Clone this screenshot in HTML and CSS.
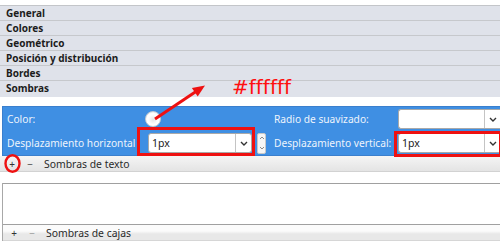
FILE: index.html
```html
<!DOCTYPE html>
<html lang="es">
<head>
<meta charset="utf-8">
<link rel="stylesheet" href="styles.css">
</head>
<body>
<div class="page">
  <div class="top-gap"></div>
  <ul class="sections">
    <li class="sec">General</li>
    <li class="sec">Colores</li>
    <li class="sec">Geométrico</li>
    <li class="sec">Posición y distribución</li>
    <li class="sec">Bordes</li>
    <li class="sec sec-last">Sombras</li>
  </ul>
  <div class="mid-gap"></div>
  <div class="props">
    <div class="lbl">Color:</div>
    <div class="val"><span class="swatch"></span></div>
    <div class="lbl lbl2">Radio de suavizado:</div>
    <div class="val2">
      <div class="combo combo-r"><span class="combo-text"></span><span class="combo-btn"><svg width="8" height="5" viewBox="0 0 8 5"><path d="M1 1 L4 4 L7 1" fill="none" stroke="#333" stroke-width="1.4"/></svg></span></div>
    </div>
    <div class="lbl">Desplazamiento horizontal</div>
    <div class="val">
      <div class="combo combo-h"><span class="combo-text">1px</span><span class="combo-btn"><svg width="8" height="5" viewBox="0 0 8 5"><path d="M1 1 L4 4 L7 1" fill="none" stroke="#333" stroke-width="1.4"/></svg></span></div>
      <div class="spin">
        <svg width="6" height="4" viewBox="0 0 6 4"><path d="M1 3 L3 1 L5 3" fill="none" stroke="#8a8a8a" stroke-width="1"/></svg>
        <svg width="6" height="4" viewBox="0 0 6 4"><path d="M1 1 L3 3 L5 1" fill="none" stroke="#8a8a8a" stroke-width="1"/></svg>
      </div>
    </div>
    <div class="lbl lbl2">Desplazamiento vertical:</div>
    <div class="val2">
      <div class="combo combo-r"><span class="combo-text">1px</span><span class="combo-btn"><svg width="8" height="5" viewBox="0 0 8 5"><path d="M1 1 L4 4 L7 1" fill="none" stroke="#333" stroke-width="1.4"/></svg></span></div>
    </div>
  </div>
  <div class="toolbar tb-text">
    <span class="tb-btn">+</span><span class="tb-btn tb-minus">−</span><span class="tb-label">Sombras de texto</span>
  </div>
  <div class="box-gap"></div>
  <div class="listbox">
    <div class="list-area"></div>
    <div class="toolbar tb-box">
      <span class="tb-btn">+</span><span class="tb-btn tb-minus faded">−</span><span class="tb-label">Sombras de cajas</span>
    </div>
  </div>

  <div class="note-text">#ffffff</div>
  <div class="mark mark-h"></div>
  <div class="mark mark-v"></div>
  <svg class="overlay" width="500" height="246" viewBox="0 0 500 246">
    <line x1="155" y1="119" x2="196" y2="91.5" stroke="#ee1111" stroke-width="3"/>
    <polygon points="205,85.5 197.7,96.6 191.9,88" fill="#ee1111"/>
    <ellipse cx="12.5" cy="163.5" rx="7" ry="8.3" fill="none" stroke="#ee1111" stroke-width="2.4"/>
  </svg>
</div>
</body>
</html>
```

FILE: styles.css
```css
* { box-sizing: border-box; }
html, body { margin: 0; padding: 0; background: #ffffff; }
body { width: 500px; height: 246px; overflow: hidden; font-family: "Noto Sans", "DejaVu Sans", sans-serif; }
.page { position: relative; width: 500px; height: 246px; }

.top-gap { height: 5px; }
.sections { list-style: none; margin: 0; padding: 0; border-top: 1px solid #c3c5c9; }
.sec {
  height: 15px;
  background: #dfe2ea;
  border-bottom: 1px solid #c6c8cc;
  font-weight: bold;
  font-size: 10px;
  line-height: 14px;
  color: #1c1c1c;
  padding-left: 6px;
}
.sec-last { border-bottom: none; height: 16px; line-height: 15px; }
.mid-gap { height: 9px; }

.props {
  margin-left: 2px;
  height: 50px;
  background: #3f8fe3;
  border: 1px solid #3a7fcd;
  border-right: none;
  display: grid;
  grid-template-columns: 144px 124px 127px 1fr;
  grid-template-rows: 20px 20px;
  row-gap: 4px;
  padding-top: 2px;
  align-items: center;
}
.lbl {
  color: #eef4fc;
  font-size: 10.2px;
  padding-left: 4px;
  white-space: nowrap;
}
.lbl2 { padding-left: 3px; }
.val { display: flex; align-items: center; height: 20px; }
.val2 { display: flex; align-items: center; height: 20px; }
.swatch {
  width: 16px; height: 16px;
  margin-left: -2px;
  border-radius: 50%;
  background: radial-gradient(circle at 50% 55%, #e6e6e6 0, #ffffff 45%, #ffffff 60%, #d8d8d8 100%);
  border: 1px solid #c8ccd2;
}
.combo {
  height: 20px;
  background: #ffffff;
  border: 1px solid #a9a9a9;
  border-radius: 3px;
  display: flex;
  align-items: stretch;
}
.combo-h { width: 104px; margin-left: 1px; }
.combo-r { width: 102px; border-right: none; border-radius: 3px 0 0 3px; }
.combo-text { flex: 1; font-size: 10.5px; line-height: 18px; padding-left: 3px; color: #1a1a1a; }
.combo-btn {
  width: 16px;
  border-left: 1px solid #c4c4c4;
  display: flex; align-items: center; justify-content: center;
}
.spin {
  margin-left: 5px;
  width: 9px; height: 21px;
  background: #f6f6f6;
  border: 1px solid #c8c8c8;
  border-radius: 2px;
  display: flex; flex-direction: column; align-items: center; justify-content: space-around;
}

.toolbar {
  height: 16px;
  display: flex;
  align-items: center;
  font-size: 10.4px;
  color: #2a2a2a;
}
.tb-text {
  background: linear-gradient(#f5f5f5, #e4e4e4);
  border-bottom: 1px solid #d2d2d2;
}
.tb-btn { width: 18px; text-align: center; font-size: 10px; color: #333; }
.tb-btn:first-child { margin-left: 3px; }
.tb-minus { color: #444; }
.faded { color: #9a9a9a; }
.tb-label { margin-left: 5px; }
.box-gap { height: 11px; }
.listbox { margin-left: 2px; border-left: 1px solid #a8a8a8; }
.list-area { height: 42px; border-top: 1px solid #a0a0a0; border-bottom: 1px solid #a0a0a0; background: #ffffff; }
.tb-box {
  background: linear-gradient(#fbfbfb 0, #fbfbfb 40%, #e8e8e8 60%, #e8e8e8 100%);
  border-bottom: 1px solid #d6d6d6;
}
.tb-box .tb-btn:first-child { margin-left: 2px; }

.note-text {
  position: absolute;
  left: 232px; top: 75px;
  color: #ff1010;
  font-family: "DejaVu Sans", sans-serif;
  font-size: 20px;
  line-height: 24px;
}
.mark { position: absolute; border: 3px solid #ee1111; }
.mark-h { left: 137px; top: 127px; width: 118px; height: 29px; }
.mark-v { left: 394px; top: 131px; width: 108px; height: 26px; }
.overlay { position: absolute; left: 0; top: 0; pointer-events: none; }
```
